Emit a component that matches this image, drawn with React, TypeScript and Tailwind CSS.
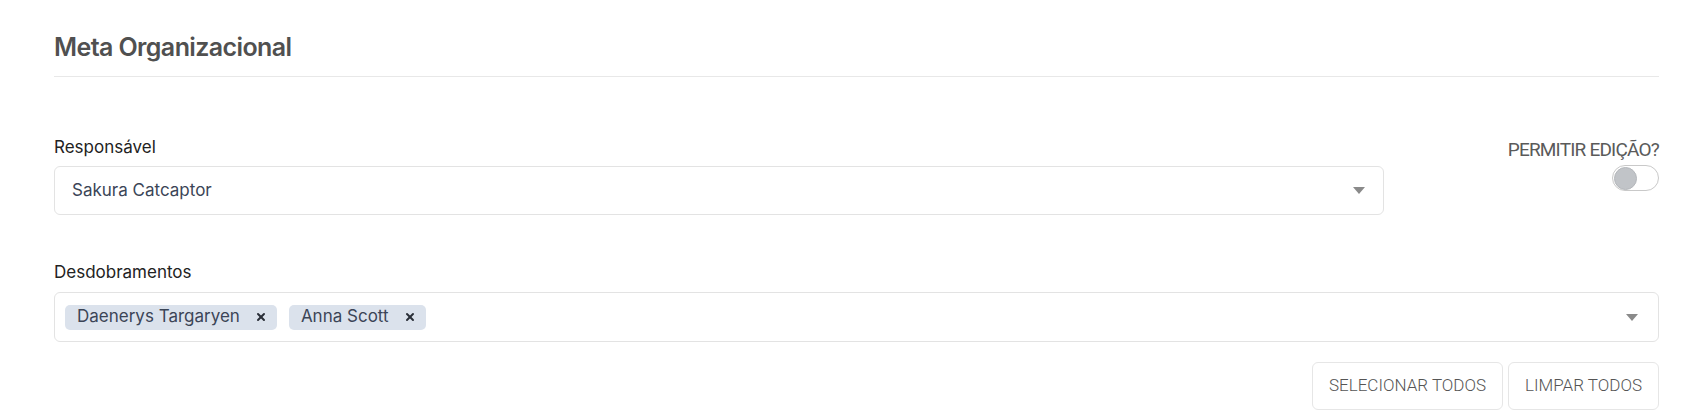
import { X } from "lucide-react";

const chips = ["Daenerys Targaryen", "Anna Scott"];

function Caret() {
  return (
    <svg width="12" height="7" viewBox="0 0 12 7" className="shrink-0">
      <path d="M0 0 H12 L6 7 Z" fill="#8a8a8a" />
    </svg>
  );
}

export default function App() {
  return (
    <div className="bg-white min-h-screen pl-[54px] pr-[35px] font-['Inter',sans-serif]">
      {/* Header */}
      <div className="pt-[31px] pb-[13px] border-b border-[#e8e8e8]">
        <h1 className="text-[25px] leading-[32px] font-semibold tracking-[-0.6px] text-[#505050]">
          Meta Organizacional
        </h1>
      </div>

      {/* Responsável + toggle */}
      <div className="flex mt-[58px]">
        <div className="flex-1">
          <label className="block text-[17px] leading-6 text-[#222]">Responsável</label>
          <div className="mt-[7px] h-[49px] flex items-center justify-between pl-[17px] pr-[18px] border border-[#e3e3e3] rounded-md">
            <span className="text-[17px] text-[#3b4557]">Sakura Catcaptor</span>
            <Caret />
          </div>
        </div>
        <div className="w-[275px] flex flex-col items-end pt-[3px]">
          <span className="font-['Roboto',sans-serif] text-[19px] leading-6 tracking-[-0.8px] text-[#5a5a5a]">
            PERMITIR EDIÇÃO?
          </span>
          <div className="mt-[3px] w-[47px] h-[26px] rounded-full border border-[#c9c9c9] bg-white flex items-center pl-[1px]">
            <div className="w-[23px] h-[23px] rounded-full bg-[#c1c4c8] border border-[#b4b7bb]" />
          </div>
        </div>
      </div>

      {/* Desdobramentos */}
      <div className="mt-[45px]">
        <label className="block text-[17px] leading-6 text-[#222]">Desdobramentos</label>
        <div className="mt-[8px] h-[50px] flex items-center justify-between pl-[10px] pr-[20px] border border-[#e3e3e3] rounded-md">
          <div className="flex items-center gap-[12px]">
            {chips.map((c) => (
              <span
                key={c}
                className="h-[25px] flex items-center gap-[15px] pl-[12px] pr-[10px] rounded-[5px] bg-[#dbe2ec] text-[17px] text-[#3b4557]"
              >
                {c}
                <X size={12} strokeWidth={4} className="text-[#2a2f38]" />
              </span>
            ))}
          </div>
          <Caret />
        </div>
      </div>

      {/* Buttons */}
      <div className="flex justify-end gap-[5px] mt-[20px]">
        <button className="h-[48px] px-[16px] border border-[#e6e6e6] rounded-md bg-white font-['Roboto',sans-serif] font-light text-[17px] text-[#555]">
          SELECIONAR TODOS
        </button>
        <button className="h-[48px] px-[16px] border border-[#e6e6e6] rounded-md bg-white font-['Roboto',sans-serif] font-light text-[17px] text-[#555]">
          LIMPAR TODOS
        </button>
      </div>
    </div>
  );
}
